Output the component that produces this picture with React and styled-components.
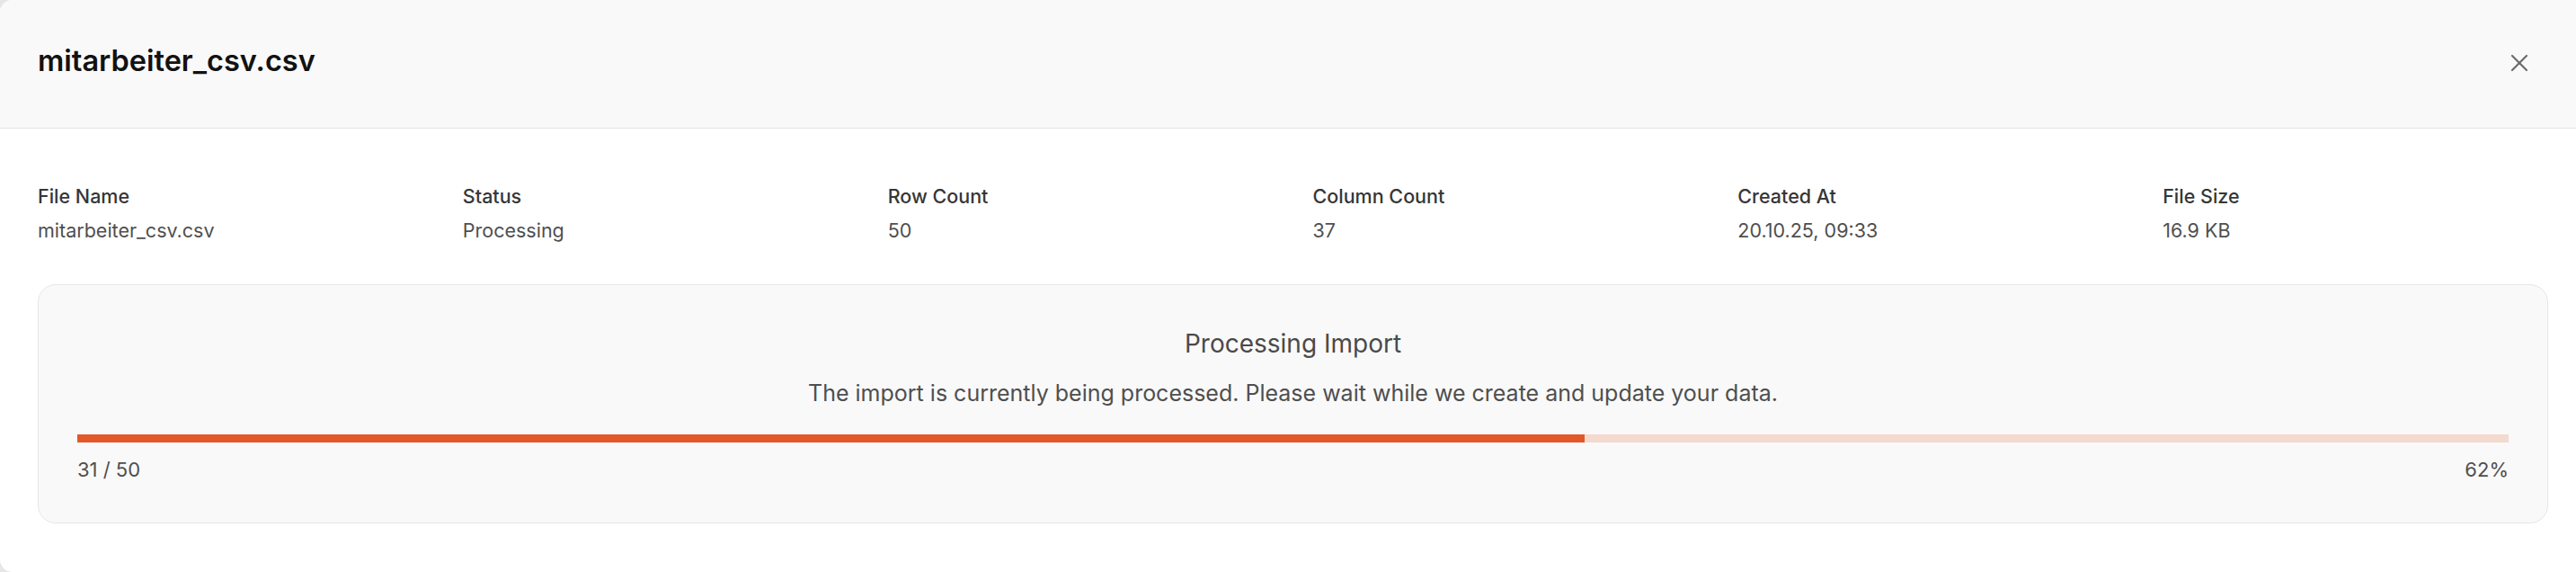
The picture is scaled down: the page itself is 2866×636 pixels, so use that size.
import React from 'react';
import styled, { createGlobalStyle } from 'styled-components';
import { X } from 'lucide-react';

const GlobalStyle = createGlobalStyle`
  html, body {
    margin: 0;
    padding: 0;
    background: #e6e6e6;
    font-family: Inter, "Noto Sans", "Liberation Sans", sans-serif;
  }
  * {
    box-sizing: border-box;
  }
`;

const details = [
  { label: 'File Name', value: 'mitarbeiter_csv.csv' },
  { label: 'Status', value: 'Processing' },
  { label: 'Row Count', value: '50' },
  { label: 'Column Count', value: '37' },
  { label: 'Created At', value: '20.10.25, 09:33' },
  { label: 'File Size', value: '16.9 KB' },
];

const App = () => {
  const done = 31;
  const total = 50;
  const percent = Math.round((done / total) * 100);

  return (
    <>
      <GlobalStyle />
      <Modal>
        <Header>
          <Title>mitarbeiter_csv.csv</Title>
          <CloseButton aria-label="Close">
            <X size={32} strokeWidth={1.6} />
          </CloseButton>
        </Header>
        <Body>
          <DetailGrid>
            {details.map((d) => (
              <Detail key={d.label}>
                <Label>{d.label}</Label>
                <Value>{d.value}</Value>
              </Detail>
            ))}
          </DetailGrid>
          <ProgressCard>
            <CardTitle>Processing Import</CardTitle>
            <CardText>
              The import is currently being processed. Please wait while we create and update your data.
            </CardText>
            <Track>
              <Fill style={{ width: `${(done / total) * 100}%` }} />
            </Track>
            <ProgressInfo>
              <span>{done} / {total}</span>
              <span>{percent}%</span>
            </ProgressInfo>
          </ProgressCard>
        </Body>
      </Modal>
    </>
  );
};

// Styled Components
const Modal = styled.div`
  height: 636px;
  background: #fff;
  border-radius: 14px 0 0 14px;
  overflow: hidden;
  display: flex;
  flex-direction: column;
`;

const Header = styled.div`
  display: flex;
  align-items: center;
  justify-content: space-between;
  background: #f9f9f9;
  border-bottom: 1px solid #e4e4e4;
  height: 143px;
  padding: 0 47px 6px 42px;
`;

const Title = styled.h2`
  margin: 0;
  font-size: 32.5px;
  line-height: 40px;
  font-weight: 600;
  color: #121212;
`;

const CloseButton = styled.button`
  display: flex;
  align-items: center;
  justify-content: center;
  padding: 0;
  border: none;
  background: transparent;
  color: #6b6b6b;
  cursor: pointer;
  margin-top: 4px;
`;

const Body = styled.div`
  padding: 61px 31px 0 42px;
`;

const DetailGrid = styled.div`
  display: grid;
  grid-template-columns: repeat(6, 1fr);
  column-gap: 44px;
`;

const Detail = styled.div`
  display: flex;
  flex-direction: column;
  gap: 10px;
`;

const Label = styled.div`
  font-size: 21.5px;
  line-height: 28px;
  font-weight: 500;
  color: #363636;
`;

const Value = styled.div`
  font-size: 21.5px;
  line-height: 28px;
  color: #4f4f4f;
`;

const ProgressCard = styled.div`
  margin-top: 46px;
  background: #f9f9f9;
  border: 1px solid #e6e6e6;
  border-radius: 20px;
  padding: 46px 43px 44px;
  display: flex;
  flex-direction: column;
`;

const CardTitle = styled.div`
  text-align: center;
  font-size: 28px;
  line-height: 38px;
  color: #4a4a4a;
`;

const CardText = styled.div`
  margin-top: 19px;
  text-align: center;
  font-size: 25px;
  line-height: 34px;
  color: #4f4f4f;
`;

const Track = styled.div`
  margin-top: 29px;
  height: 9px;
  background: #f4d9cf;
`;

const Fill = styled.div`
  height: 100%;
  background: #e25828;
`;

const ProgressInfo = styled.div`
  margin-top: 15px;
  display: flex;
  justify-content: space-between;
  font-size: 22px;
  line-height: 30px;
  color: #4f4f4f;
`;

export default App;
